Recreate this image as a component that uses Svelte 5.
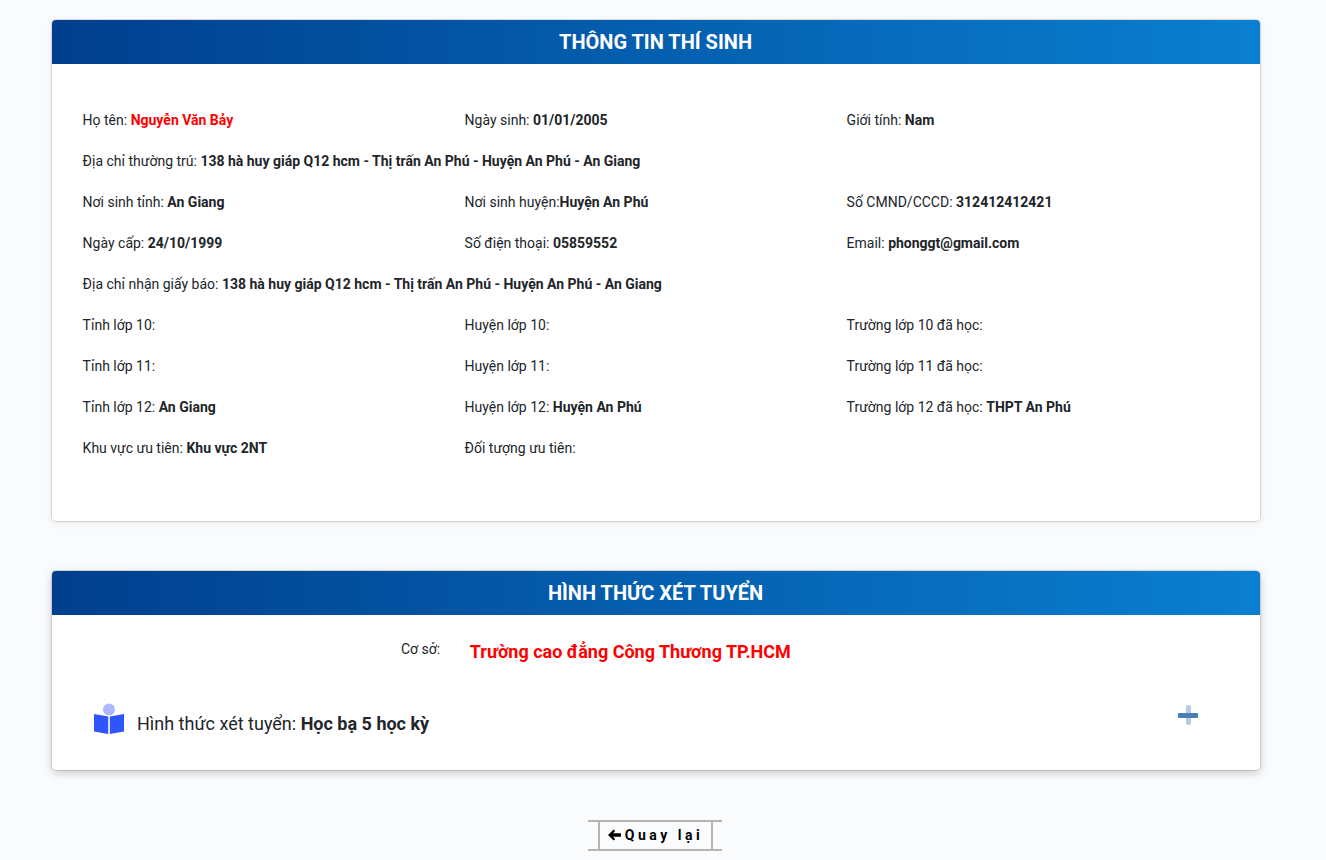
<script>
  const rows = [
    [["Họ tên: ", "Nguyễn Văn Bảy", "red"], ["Ngày sinh: ", "01/01/2005"], ["Giới tính: ", "Nam"]],
    [["Địa chỉ thường trú: ", "138 hà huy giáp Q12 hcm - Thị trấn An Phú - Huyện An Phú - An Giang"]],
    [["Nơi sinh tỉnh: ", "An Giang"], ["Nơi sinh huyện:", "Huyện An Phú"], ["Số CMND/CCCD: ", "312412412421"]],
    [["Ngày cấp: ", "24/10/1999"], ["Số điện thoại: ", "05859552"], ["Email: ", "phonggt@gmail.com"]],
    [["Địa chỉ nhận giấy báo: ", "138 hà huy giáp Q12 hcm - Thị trấn An Phú - Huyện An Phú - An Giang"]],
    [["Tỉnh lớp 10:", ""], ["Huyện lớp 10:", ""], ["Trường lớp 10 đã học:", ""]],
    [["Tỉnh lớp 11:", ""], ["Huyện lớp 11:", ""], ["Trường lớp 11 đã học:", ""]],
    [["Tỉnh lớp 12: ", "An Giang"], ["Huyện lớp 12: ", "Huyện An Phú"], ["Trường lớp 12 đã học: ", "THPT An Phú"]],
    [["Khu vực ưu tiên: ", "Khu vực 2NT"], ["Đối tượng ưu tiên:", ""]]
  ];
</script>

<main class="page">
  <section class="card first">
    <h2 class="head">THÔNG TIN THÍ SINH</h2>
    <div class="info">
      {#each rows as row}
        <div class="row">
          {#each row as c}
            <div class="cell" class:wide={row.length === 1}>{c[0]}<b class:red={c[2]}>{c[1]}</b></div>
          {/each}
        </div>
      {/each}
    </div>
  </section>

  <section class="card second">
    <h2 class="head">HÌNH THỨC XÉT TUYỂN</h2>
    <div class="campus">
      <span class="campus-label">Cơ sở:</span>
      <strong class="campus-name">Trường cao đẳng Công Thương TP.HCM</strong>
    </div>
    <div class="method">
      <svg class="book" width="32" height="32" viewBox="0 0 32 32" aria-hidden="true">
        <circle cx="16" cy="6.5" r="6" fill="#adb9ff"/>
        <path d="M1 11 L15.2 13.6 V31 L1 28.4 Z" fill="#2f55ff"/>
        <path d="M31 11 L16.8 13.6 V31 L31 28.4 Z" fill="#2f55ff"/>
      </svg>
      <span class="method-text">Hình thức xét tuyển: <b>Học bạ 5 học kỳ</b></span>
      <span class="plus" aria-hidden="true"></span>
    </div>
  </section>

  <div class="back-wrap">
    <button class="back" type="button">
      <svg width="13" height="12" viewBox="0 0 13 12" aria-hidden="true">
        <path d="M0 6 L5.6 0.4 L7.2 2 L5 4.2 H13 V7.8 H5 L7.2 10 L5.6 11.6 Z" fill="#000"/>
      </svg>
      <span>Quay lại</span>
    </button>
  </div>
</main>

<style>
  :global(body) {
    margin: 0;
    background: #f9fbfd;
    font-family: Roboto, "Noto Sans", sans-serif;
    color: #212529;
  }
  .page {
    width: 1208px;
    margin-left: 52px;
    padding-top: 20px;
    height: 840px;
  }
  .card {
    background: #fff;
    border-radius: 4px;
    overflow: hidden;
    box-sizing: border-box;
  }
  .first {
    height: 501px;
    box-shadow: 0 0 0 1px rgba(0, 0, 0, 0.12), 0 2px 8px rgba(0, 0, 0, 0.07);
  }
  .second {
    height: 199px;
    margin-top: 50px;
    box-shadow: 0 0 0 1px rgba(0, 0, 0, 0.12), 0 3px 10px rgba(0, 0, 0, 0.2);
  }
  .head {
    margin: 0;
    height: 44px;
    line-height: 44px;
    text-align: center;
    font-size: 20px;
    font-weight: 700;
    color: #fff;
    padding-right: 1px;
    background: linear-gradient(to right, #003f8e, #0a7fd0);
  }
  .info {
    padding: 36px 30.6px 0;
  }
  .row {
    display: flex;
    padding: 10px 0;
    line-height: 21px;
    font-size: 14px;
  }
  .cell {
    width: 382px;
    flex: none;
  }
  .cell.wide {
    width: auto;
  }
  b {
    font-weight: 700;
  }
  .red {
    color: #f00;
  }
  .campus {
    display: flex;
    align-items: center;
    height: 21px;
    margin-top: 26px;
    padding-left: 349px;
  }
  .campus-label {
    font-size: 14px;
    line-height: 21px;
    position: relative;
    top: -2px;
  }
  .campus-name {
    margin-left: 29.6px;
    font-size: 18px;
    color: #f00;
    font-weight: 700;
  }
  .method {
    display: flex;
    align-items: center;
    margin-top: 41px;
    padding-left: 41px;
    height: 32px;
  }
  .book {
    flex: none;
  }
  .method-text {
    margin-left: 12px;
    font-size: 18px;
    position: relative;
    top: 4px;
  }
  .plus {
    position: relative;
    width: 20px;
    height: 20px;
    margin-left: auto;
    margin-right: 62px;
    top: -4px;
  }
  .plus::before {
    content: "";
    position: absolute;
    left: 0;
    top: 7.5px;
    width: 20px;
    height: 5px;
    border-radius: 1px;
    background: #4a80b8;
  }
  .plus::after {
    content: "";
    position: absolute;
    left: 7.5px;
    top: 0;
    width: 5px;
    height: 20px;
    border-radius: 2px;
    background: rgba(74, 128, 184, 0.4);
  }
  .back-wrap {
    width: 134px;
    box-sizing: border-box;
    margin: 50px 0 0 536px;
    padding: 0 9px 0 10px;
    border-top: 2px solid #b4b4b4;
    border-bottom: 2px solid #b4b4b4;
    height: 31px;
  }
  .back {
    display: flex;
    align-items: center;
    justify-content: center;
    gap: 4px;
    width: 100%;
    height: 100%;
    padding: 0 0 1px;
    background: transparent;
    border: 0;
    border-left: 2px solid #b4b4b4;
    border-right: 2px solid #b4b4b4;
    font-family: Roboto, sans-serif;
    font-size: 14px;
    font-weight: 700;
    letter-spacing: 3.5px;
    color: #000;
  }
</style>
